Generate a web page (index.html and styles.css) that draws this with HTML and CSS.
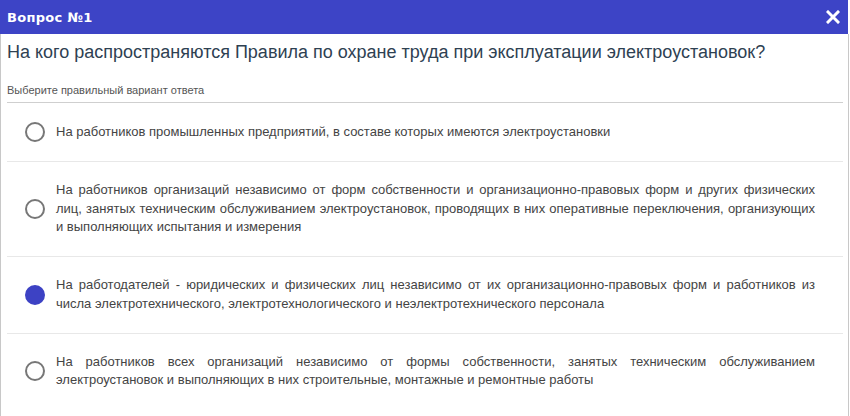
FILE: index.html
```html
<!DOCTYPE html>
<html lang="ru">
<head>
<meta charset="utf-8">
<link rel="stylesheet" href="styles.css">
</head>
<body>
<div class="modal">
  <div class="header">
    <span class="title">Вопрос №1</span>
    <svg class="close" width="14" height="14" viewBox="0 0 14 14"><path d="M2 2L12 12M12 2L2 12" stroke="#fff" stroke-width="3" stroke-linecap="square"/></svg>
  </div>
  <div class="content">
    <div class="question">На кого распространяются Правила по охране труда при эксплуатации электроустановок?</div>
    <div class="hint">Выберите правильный вариант ответа</div>
    <div class="options">
      <div class="option">
        <span class="radio"></span>
        <div class="text">На работников промышленных предприятий, в составе которых имеются электроустановки</div>
      </div>
      <div class="option">
        <span class="radio"></span>
        <div class="text">На работников организаций независимо от форм собственности и организационно-правовых форм и других физических лиц, занятых техническим обслуживанием электроустановок, проводящих в них оперативные переключения, организующих и выполняющих испытания и измерения</div>
      </div>
      <div class="option">
        <span class="radio checked"></span>
        <div class="text">На работодателей - юридических и физических лиц независимо от их организационно-правовых форм и работников из числа электротехнического, электротехнологического и неэлектротехнического персонала</div>
      </div>
      <div class="option last">
        <span class="radio"></span>
        <div class="text">На работников всех организаций независимо от формы собственности, занятых техническим обслуживанием электроустановок и выполняющих в них строительные, монтажные и ремонтные работы</div>
      </div>
    </div>
  </div>
</div>
</body>
</html>
```
FILE: styles.css
```css
* { box-sizing: border-box; }
html, body { margin: 0; padding: 0; background: #fff; }
.modal {
  width: 850px;
  height: 416px;
  overflow: hidden;
  font-family: "Liberation Sans", Arial, sans-serif;
}
.header {
  height: 34px;
  width: 848px;
  background: #3d44c6;
  display: flex;
  align-items: center;
  justify-content: space-between;
  padding: 0 8px 0 7px;
}
.title {
  color: #fff;
  font-family: "DejaVu Sans", Verdana, sans-serif;
  font-weight: bold;
  font-size: 13px;
  letter-spacing: 0.3px;
}
.close { display: block; margin-top: -1px; }
.content {
  width: 849px;
  height: 382px;
  border-left: 1px solid #c8c8c8;
  border-right: 1px solid #c8c8c8;
  padding: 0 5px 0 6px;
}
.question {
  font-size: 18px;
  line-height: 22px;
  color: #2e4152;
  padding-top: 7px;
}
.hint {
  font-size: 11px;
  line-height: 14px;
  color: #555;
  margin-top: 20px;
  padding-bottom: 5px;
  border-bottom: 1px solid #cfcfcf;
}
.option {
  display: flex;
  align-items: center;
  padding: 19px 28px 19px 18px;
  border-bottom: 1px solid #e8e8e8;
}
.option.last { border-bottom: none; }
.radio {
  flex: none;
  width: 20px;
  height: 20px;
  border-radius: 50%;
  border: 2px solid #777;
  margin-right: 11px;
}
.radio.checked {
  border-color: #3d42c4;
  background: #3d42c4;
}
.text {
  flex: 1;
  font-size: 13px;
  line-height: 18.7px;
  color: #444;
  text-align: justify;
}
```
